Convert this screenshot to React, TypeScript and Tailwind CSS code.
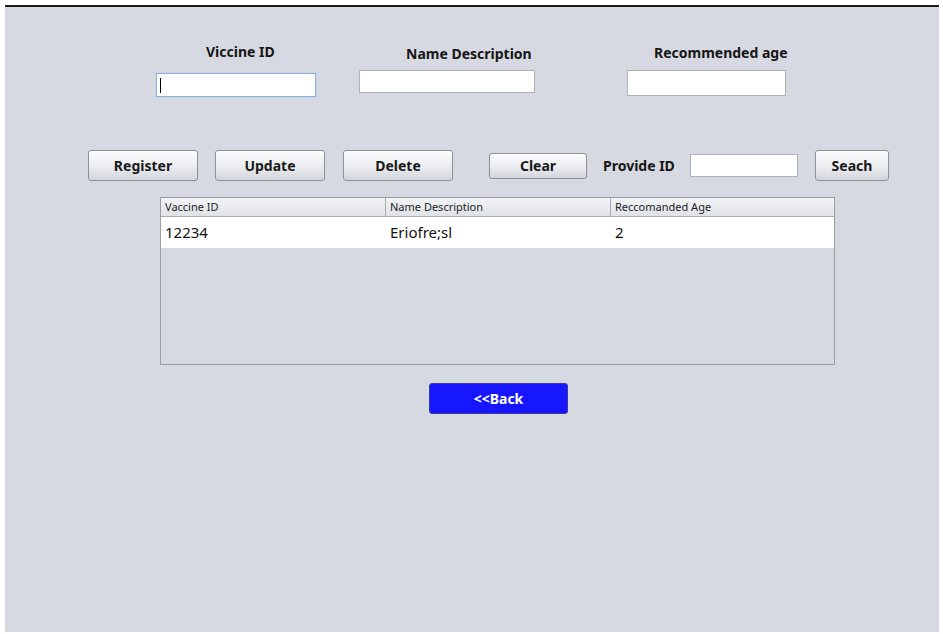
import React from "react";

const btn =
  "flex items-center justify-center rounded-[3px] border border-[#8c8f94] bg-gradient-to-b from-[#fcfcfd] via-[#eceef1] to-[#d3d6dc] text-[14px] font-bold text-[#1a1a1a] shadow-[inset_0_1px_0_#ffffff]";

export default function App() {
  return (
    <div
      className="h-[634px] w-[943px] bg-white pl-[5px] pt-[5px]"
      style={{ fontFamily: '"Noto Sans", "Open Sans", sans-serif' }}
    >
      <div className="flex h-[627px] w-[934px] flex-col border-t-2 border-[#1c1c1c] bg-[#d6d9e1] pt-px">
        {/* Row 1: labels + inputs */}
        <div className="flex items-start">
          <div className="ml-[151px] mt-[34px] flex flex-col">
            <div className="pl-[50px] text-[14px] font-bold leading-[20px] text-[#161616]">Viccine ID</div>
            <div className="relative mt-[11px] h-[24px] w-[160px] border border-[#8eb0d6] bg-white shadow-[0_0_0_1px_#c5d6ea]">
              <div className="absolute left-[3px] top-[4px] h-[15px] w-px bg-black" />
            </div>
          </div>
          <div className="ml-[43px] mt-[36px] flex flex-col">
            <div className="pl-[47px] text-[14px] font-bold leading-[20px] text-[#161616]">Name Description</div>
            <div className="mt-[6px] h-[23px] w-[176px] border border-[#aeb1b6] bg-white" />
          </div>
          <div className="ml-[92px] mt-[35px] flex flex-col">
            <div className="pl-[27px] text-[14px] font-bold leading-[20px] text-[#161616]">Recommended age</div>
            <div className="mt-[7px] h-[26px] w-[159px] border border-[#aeb1b6] bg-white" />
          </div>
        </div>

        {/* Row 2: buttons */}
        <div className="mt-[53px] flex h-[31px] items-center">
          <div className={`${btn} ml-[83px] h-[31px] w-[110px]`}>Register</div>
          <div className={`${btn} ml-[17px] h-[31px] w-[110px]`}>Update</div>
          <div className={`${btn} ml-[18px] h-[31px] w-[110px]`}>Delete</div>
          <div className={`${btn} ml-[36px] h-[26px] w-[98px]`}>Clear</div>
          <div className="ml-[16px] w-[87px] text-[14px] font-bold leading-[20px] text-[#161616]">Provide ID</div>
          <div className="h-[23px] w-[108px] border border-[#aeb1b6] bg-white" />
          <div className={`${btn} ml-[17px] h-[31px] w-[74px]`}>Seach</div>
        </div>

        {/* Table */}
        <div className="ml-[155px] mt-[16px] flex h-[168px] w-[675px] flex-col border border-[#9a9da2] bg-[#d6d9e1]">
          <div className="flex h-[19px] border-b border-[#a9acb1] bg-gradient-to-b from-[#f3f4f6] to-[#dfe2e7] text-[11px] leading-[18px] text-[#1e1e1e]">
            <div className="w-[225px] border-r border-[#a9acb1] pl-[4px]">Vaccine ID</div>
            <div className="w-[225px] border-r border-[#a9acb1] pl-[4px]">Name Description</div>
            <div className="flex-1 pl-[4px]">Reccomanded Age</div>
          </div>
          <div className="flex h-[31px] bg-white text-[15px] leading-[31px] text-[#111]">
            <div className="w-[225px] pl-[4px]">12234</div>
            <div className="w-[225px] pl-[4px]">Eriofre;sl</div>
            <div className="flex-1 pl-[4px]">2</div>
          </div>
        </div>

        {/* Back */}
        <div className="ml-[424px] mt-[18px] flex h-[31px] w-[139px] items-center justify-center rounded-[3px] border border-[#3b3b9a] bg-[#1616ff] text-[14px] font-bold text-white">
          &lt;&lt;Back
        </div>
      </div>
    </div>
  );
}
